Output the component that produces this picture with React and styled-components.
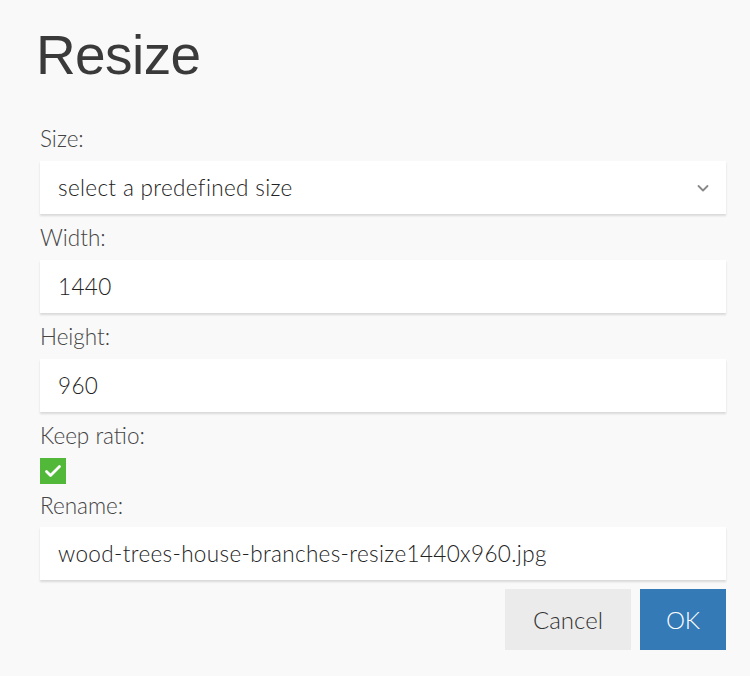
import React from "react";
import styled, { createGlobalStyle } from "styled-components";

const GlobalStyle = createGlobalStyle`
  html, body {
    margin: 0;
    padding: 0;
    background: #f9f9f9;
  }
  body {
    font-family: Lato, "Open Sans", sans-serif;
    color: #444;
  }
`;

const Dialog = styled.div`
  width: 750px;
  height: 676px;
  box-sizing: border-box;
  padding: 18px 24px 0 40px;
  background: #f9f9f9;
`;

const Title = styled.h1`
  margin: 0 0 0 -4px;
  height: 97px;
  font-family: "Liberation Sans", Arial, sans-serif;
  font-weight: 400;
  font-size: 55px;
  line-height: 74px;
  color: #3a3a3a;
  letter-spacing: -0.6px;
`;

const Label = styled.div`
  height: ${(p) => (p.$short ? 43 : 46)}px;
  display: flex;
  align-items: center;
  padding-top: ${(p) => (p.$short ? 0 : 1)}px;
  box-sizing: border-box;
  font-size: 22.5px;
  font-weight: 300;
  color: #444;
`;

const Field = styled.div`
  height: 53px;
  display: flex;
  align-items: center;
  justify-content: space-between;
  padding: 0 18px;
  background: #fff;
  box-shadow: 0 2px 2px rgba(0, 0, 0, 0.13);
  font-size: 22.5px;
  font-weight: 300;
  letter-spacing: 0.35px;
  color: #222;
`;

const Chevron = styled.svg`
  width: 14px;
  height: 14px;
  margin-right: -2px;
`;

const CheckRow = styled.div`
  height: 26px;
`;

const CheckBox = styled.div`
  width: 26px;
  height: 26px;
  background: #52b83a;
  display: flex;
  align-items: center;
  justify-content: center;
`;

const Actions = styled.div`
  display: flex;
  justify-content: flex-end;
  gap: 9px;
  margin-top: 9px;
`;

const Button = styled.button`
  height: 61px;
  min-width: ${(p) => (p.$primary ? 86 : 126)}px;
  padding: 0 20px;
  border: none;
  font-family: Lato, "Open Sans", sans-serif;
  font-size: 24px;
  font-weight: 300;
  background: ${(p) => (p.$primary ? "#337ab7" : "#ebebeb")};
  color: ${(p) => (p.$primary ? "#fff" : "#333")};
  cursor: pointer;
`;

export default function App() {
  return (
    <>
      <GlobalStyle />
      <Dialog>
        <Title>Resize</Title>
        <Label>Size:</Label>
        <Field>
          <span>select a predefined size</span>
          <Chevron viewBox="0 0 14 14" fill="none">
            <path d="M2.5 5l4.5 4.5 4.5-4.5" stroke="#888" strokeWidth="1.8" strokeLinecap="round" strokeLinejoin="round" />
          </Chevron>
        </Field>
        <Label>Width:</Label>
        <Field>1440</Field>
        <Label>Height:</Label>
        <Field>960</Field>
        <Label>Keep ratio:</Label>
        <CheckRow>
          <CheckBox>
            <svg width="18" height="18" viewBox="0 0 18 18" fill="none">
              <path d="M2.5 9.5l4 4 9-9" stroke="#fff" strokeWidth="2.8" strokeLinecap="round" strokeLinejoin="round" />
            </svg>
          </CheckBox>
        </CheckRow>
        <Label $short>Rename:</Label>
        <Field>wood-trees-house-branches-resize1440x960.jpg</Field>
        <Actions>
          <Button>Cancel</Button>
          <Button $primary>OK</Button>
        </Actions>
      </Dialog>
    </>
  );
}
